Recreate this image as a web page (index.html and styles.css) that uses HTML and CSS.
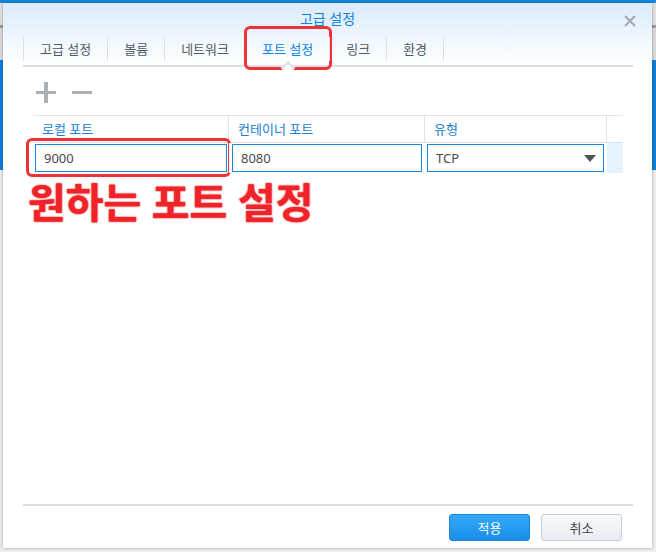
FILE: index.html
```html
<!DOCTYPE html>
<html lang="ko">
<head>
    <meta charset="UTF-8">
    <meta name="viewport" content="width=device-width, initial-scale=1.0">
    <title>고급 설정</title>
    <link rel="stylesheet" href="styles.css">
</head>
<body>
    <div class="dialog">
        <div class="dialog-header">
            <span class="dialog-title">고급 설정</span>
            <span class="dialog-close">
                <svg width="14" height="14" viewBox="0 0 14 14">
                    <path d="M2 2 L12 12 M12 2 L2 12" stroke="#a3a7ab" stroke-width="2" fill="none"/>
                </svg>
            </span>
        </div>

        <div class="tabs">
            <a href="#" class="tab">고급 설정</a>
            <a href="#" class="tab">볼륨</a>
            <a href="#" class="tab">네트워크</a>
            <a href="#" class="tab active">포트 설정<span class="mark-tab"></span></a>
            <a href="#" class="tab">링크</a>
            <a href="#" class="tab last">환경</a>
        </div>

        <div class="dialog-body">
            <div class="toolbar">
                <span class="tool-btn plus"></span>
                <span class="tool-btn minus"></span>
            </div>

            <div class="grid">
                <div class="grid-row grid-head">
                    <div class="cell col1">로컬 포트</div>
                    <div class="cell col2">컨테이너 포트</div>
                    <div class="cell col3">유형</div>
                    <div class="cell col4"></div>
                </div>
                <div class="grid-row grid-data">
                    <div class="cell col1">
                        <input class="field" type="text" value="9000">
                        <span class="mark-input"></span>
                    </div>
                    <div class="cell col2">
                        <input class="field" type="text" value="8080">
                    </div>
                    <div class="cell col3">
                        <div class="field select">
                            <span>TCP</span>
                            <span class="arrow"></span>
                        </div>
                    </div>
                    <div class="cell col4"></div>
                </div>
            </div>

            <div class="note">원하는 포트 설정</div>
        </div>

        <div class="dialog-footer">
            <button class="btn btn-primary">적용</button>
            <button class="btn">취소</button>
        </div>
    </div>
</body>
</html>
```

FILE: styles.css
```css
html, body {
    margin: 0;
    padding: 0;
}
body {
    width: 656px;
    height: 552px;
    overflow: hidden;
    font-family: "Noto Sans", "Noto Sans CJK KR", sans-serif;
    background: linear-gradient(to bottom,
        #1788dc 0, #1788dc 3px,
        #e2e2e2 3px, #e2e2e2 25px,
        #9c9c9c 25px, #9c9c9c 28px,
        #dadada 28px, #dadada 60px,
        #0f7fd6 60px, #0f7fd6 170px,
        #eeeeee 170px, #eeeeee 100%);
    padding: 3px 4px 4px 3px;
    box-sizing: border-box;
}

.dialog {
    width: 649px;
    height: 545px;
    background: #fff;
    box-shadow: 0 0 3px rgba(0, 0, 0, 0.35);
    display: flex;
    flex-direction: column;
    background-image: linear-gradient(to bottom, #daebfb 0, #ffffff 62px);
}

.dialog-header {
    height: 30px;
    display: flex;
    align-items: center;
    justify-content: center;
    position: relative;
}
.dialog-title {
    color: #0b82dc;
    font-size: 14px;
}
.dialog-close {
    position: absolute;
    right: 15px;
    top: 8px;
    width: 14px;
    height: 14px;
}

.tabs {
    margin: 0 19px 0 20px;
    height: 32px;
    display: flex;
    align-items: center;
    border-bottom: 2px solid #dcdee0;
    position: relative;
}
.tab {
    height: 24px;
    line-height: 24px;
    padding: 0 16px;
    border-left: 1px solid #d8e0e8;
    font-size: 13px;
    color: #505a64;
    text-decoration: none;
    position: relative;
}
.tab.last {
    border-right: 1px solid #d8e0e8;
}
.tab.active {
    color: #0b82dc;
}
.tab.active::after {
    content: "";
    position: absolute;
    left: 50%;
    bottom: -12px;
    width: 8px;
    height: 8px;
    margin-left: -5px;
    background: #fff;
    border-left: 2px solid #dcdee0;
    border-top: 2px solid #dcdee0;
    transform: rotate(45deg);
}
.mark-tab {
    position: absolute;
    left: -2px;
    right: -3px;
    top: -11px;
    bottom: -9px;
    box-sizing: border-box;
    border: 3px solid #ec3438;
    border-radius: 6px;
}

.dialog-body {
    flex: 1;
    border-bottom: 2px solid #dcdee0;
    margin: 0 19px 0 20px;
    padding: 0 10px;
}

.toolbar {
    height: 48px;
    display: flex;
    align-items: center;
    gap: 16px;
    padding-left: 3px;
    box-sizing: border-box;
    padding-top: 2px;
}
.tool-btn {
    width: 20px;
    height: 21px;
    position: relative;
}
.tool-btn::before {
    content: "";
    position: absolute;
    left: 0;
    top: 9px;
    width: 20px;
    height: 3px;
    background: #aab0b6;
}
.plus::after {
    content: "";
    position: absolute;
    left: 8px;
    top: 0;
    width: 4px;
    height: 21px;
    background: #aab0b6;
}

.grid {
    border-top: 1px solid #dde5ec;
}
.grid-row {
    display: flex;
}
.grid-head {
    height: 26px;
    border-bottom: 1px solid #dde5ec;
}
.grid-head .cell {
    line-height: 26px;
    padding-left: 9px;
    font-size: 13px;
    color: #2080d0;
    border-right: 1px solid #dde5ec;
}
.cell {
    box-sizing: border-box;
    position: relative;
}
.col1 { width: 196px; }
.col2 { width: 196px; }
.col3 { width: 182px; }
.col4 { flex: 1; }
.grid-head .col4 { border-right: none; }

.grid-data {
    height: 30px;
    background: #e6f2fc;
}
.grid-data .cell {
    padding: 1px 2px 0 2px;
    background: #fff;
}
.grid-data .col2 { padding-left: 3px; padding-right: 3px; }
.grid-data .col4 { background: #e6f2fc; }

.field {
    box-sizing: border-box;
    width: 100%;
    height: 28px;
    border: 1px solid #1c87d9;
    padding: 0 8px;
    font-family: "Noto Sans", "Noto Sans CJK KR", sans-serif;
    font-size: 13px;
    color: #4a4a4a;
    outline: none;
    margin: 0;
}
.select {
    display: flex;
    align-items: center;
    justify-content: space-between;
    width: 177px;
    padding: 0 7px 0 8px;
}
.arrow {
    width: 0;
    height: 0;
    border-left: 6px solid transparent;
    border-right: 6px solid transparent;
    border-top: 7px solid #50555a;
}

.mark-input {
    position: absolute;
    left: -7px;
    top: -5px;
    width: 205px;
    height: 39px;
    box-sizing: border-box;
    border: 3px solid #ec3438;
    border-radius: 6px;
}

.note {
    margin: 6px 0 0 -5px;
    font-size: 41px;
    font-weight: bold;
    line-height: 46px;
    color: #f0232a;
    text-shadow: 0 0 2px #ff5a5a, 0 0 1px #c81010;
}

.dialog-footer {
    height: 42px;
    display: flex;
    justify-content: flex-end;
    align-items: flex-start;
    gap: 11px;
    padding: 8px 30px 0 0;
    box-sizing: border-box;
}
.btn {
    width: 81px;
    height: 27px;
    border: 1px solid #c6d0da;
    border-radius: 3px;
    background: linear-gradient(to bottom, #f7f9fb, #e8edf2);
    font-family: "Noto Sans", "Noto Sans CJK KR", sans-serif;
    font-size: 13px;
    color: #404448;
    cursor: pointer;
    padding: 0;
}
.btn-primary {
    border-color: #1a86d8;
    background: linear-gradient(to bottom, #33a9fa, #1a8ee8);
    color: #fff;
}
```
